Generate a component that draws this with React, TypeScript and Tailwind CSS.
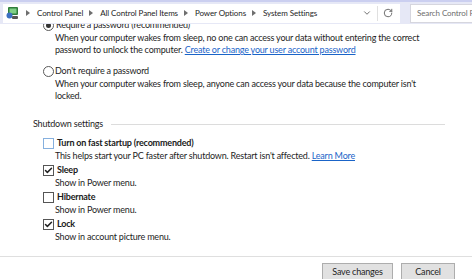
import { RotateCw, ChevronDown, Check } from 'lucide-react';

function Crumb({ label }: { label: string }) {
  return (
    <div className="flex items-center">
      <svg width="4" height="6" viewBox="0 0 4 6" className="ml-[6px] mr-[7px] shrink-0">
        <path d="M0 0 L4 3 L0 6 Z" fill="#6e6e6e" />
      </svg>
      <span>{label}</span>
    </div>
  );
}

function Radio({ checked }: { checked?: boolean }) {
  return (
    <span className="w-[11px] h-[11px] rounded-full border border-[#5a5a5a] bg-white flex items-center justify-center shrink-0">
      {checked && <span className="w-[5px] h-[5px] rounded-full bg-[#333]" />}
    </span>
  );
}

function Box({ checked, hilite }: { checked?: boolean; hilite?: boolean }) {
  return (
    <span
      className={
        'w-[11px] h-[11px] border flex items-center justify-center shrink-0 bg-white ' +
        (hilite ? 'border-[#86b0de]' : 'border-[#555]')
      }
    >
      {checked && <Check size={9} strokeWidth={4} className="text-[#222]" />}
    </span>
  );
}

function Option({ label, desc, checked, hilite }: { label: string; desc: React.ReactNode; checked?: boolean; hilite?: boolean }) {
  return (
    <div className="flex flex-col">
      <div className="flex items-center gap-[3px] h-[12.5px]">
        <Box checked={checked} hilite={hilite} />
        <span className="font-bold text-[#1a1a1a]">{label}</span>
      </div>
      <div className="pl-[12px] h-[12.5px]">{desc}</div>
    </div>
  );
}

export default function App() {
  return (
    <div
      className="w-[472px] h-[279px] bg-white overflow-hidden text-[9px] tracking-[-0.2px] leading-[12.5px] text-[#1e1e1e] flex flex-col whitespace-nowrap"
      style={{ fontFamily: 'Lato, "Noto Sans", sans-serif' }}
    >
      <div className="h-[24px] bg-[#e6e8f6] border-t-2 border-[#cbcff0] flex items-center pl-[3px] gap-[10px] shrink-0 relative z-10">
        <div className="w-[397px] h-[19px] bg-white flex items-center pl-[3px] pr-[3px] text-[8px] tracking-[-0.1px]">
          <svg width="14" height="14" viewBox="0 0 14 14" className="shrink-0">
            <rect x="2" y="1" width="10" height="8" rx="1" fill="#2f7d3a" />
            <rect x="3.5" y="2.5" width="7" height="5" fill="#7fcf86" />
            <circle cx="3.5" cy="9.5" r="3" fill="#3b6fc2" />
            <rect x="6" y="10" width="6" height="3" rx="1" fill="#555" />
          </svg>
          <Crumb label="Control Panel" />
          <Crumb label="All Control Panel Items" />
          <Crumb label="Power Options" />
          <Crumb label="System Settings" />
          <div className="flex-1" />
          <ChevronDown size={10} className="text-[#555]" />
          <div className="w-[1px] h-[15px] bg-[#e0e0e0] mx-[5px]" />
          <RotateCw size={10} className="text-[#555]" />
          <div className="w-[4px]" />
        </div>
        <div className="flex-1 h-[19px] bg-white border border-[#d6d6de] border-r-0 flex items-center pl-[6px] text-[8px] tracking-[-0.1px] text-[#6d6d6d] overflow-hidden">
          Search Control Panel
        </div>
      </div>

      <div className="flex-1 pl-[43px] flex flex-col overflow-hidden">
        <div className="flex items-center gap-[2px] -mt-[5px]">
          <Radio checked />
          <span>Require a password (recommended)</span>
        </div>
        <div className="pl-[12px]">
          <div>When your computer wakes from sleep, no one can access your data without entering the correct</div>
          <div>
            password to unlock the computer.{' '}
            <span className="text-[#1a64c8] underline">Create or change your user account password</span>
          </div>
        </div>
        <div className="flex items-center gap-[1px] mt-[8.5px]">
          <Radio />
          <span>Don't require a password</span>
        </div>
        <div className="pl-[12px]">
          <div>When your computer wakes from sleep, anyone can access your data because the computer isn't</div>
          <div>locked.</div>
        </div>

        <div className="flex items-center -ml-[10px] mt-[15.5px] pr-[27px]">
          <span>Shutdown settings</span>
          <div className="flex-1 h-[1px] bg-[#dcdcdc] ml-[8px]" />
        </div>

        <div className="flex flex-col gap-[2px] mt-[6.5px]">
          <Option
            label="Turn on fast startup (recommended)"
            hilite
            desc={
              <>
                This helps start your PC faster after shutdown. Restart isn't affected.{' '}
                <span className="text-[#1a64c8] underline">Learn More</span>
              </>
            }
          />
          <Option label="Sleep" checked desc="Show in Power menu." />
          <Option label="Hibernate" desc="Show in Power menu." />
          <Option label="Lock" checked desc="Show in account picture menu." />
        </div>
      </div>

      <div className="h-[23px] border-t border-[#dfdfdf] flex items-start pt-[6px] justify-end gap-[8px] pr-[17px] shrink-0">
        <button className="w-[71px] h-[17px] bg-[#e1e1e1] border border-[#adadad] text-[9px] leading-[15px] text-[#1e1e1e]">
          Save changes
        </button>
        <button className="w-[54px] h-[17px] bg-[#e1e1e1] border border-[#adadad] text-[9px] leading-[15px] text-[#1e1e1e]">
          Cancel
        </button>
      </div>
    </div>
  );
}
